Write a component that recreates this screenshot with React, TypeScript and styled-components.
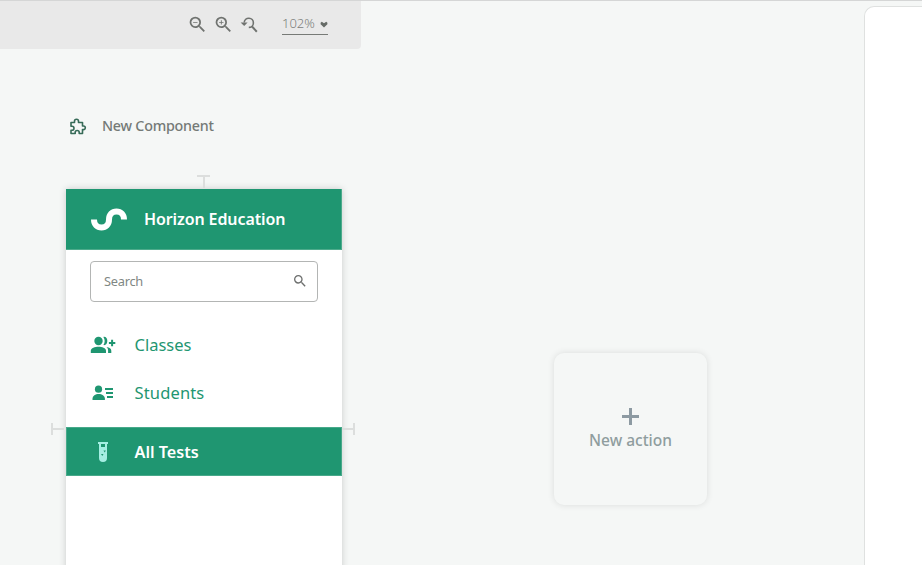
import React from "react";
import styled, { createGlobalStyle } from "styled-components";
import { MdZoomIn, MdZoomOut, MdSearch } from "react-icons/md";

const green = "#1f9671";

const GlobalStyle = createGlobalStyle`
  *, *::before, *::after { box-sizing: border-box; }
  body {
    margin: 0;
    overflow: hidden;
    background: #f5f7f6;
    font-family: "Noto Sans", "Open Sans", sans-serif;
  }
  svg { display: block; flex: none; }
`;

const Page = styled.div`
  display: flex;
  width: 922px;
  height: 565px;
  overflow: hidden;
  background: #f5f7f6;
  border-top: 1px solid #d5d6d6;
`;

const Workspace = styled.main`
  display: flex;
  flex-direction: column;
  width: 361px;
`;

const Toolbar = styled.header`
  display: flex;
  flex: none;
  align-items: flex-start;
  height: 48px;
  padding: 13px 33px 0 187px;
  background: #e9e9e9;
  border-radius: 0 0 4px 0;
  color: #707370;
`;

const Tools = styled.div`
  display: flex;
  gap: 5px;
  flex: 1;
`;

const ZoomSelect = styled.div`
  display: flex;
  justify-content: space-between;
  width: 46px;
  height: 21px;
  border-bottom: 1px solid #777a77;
`;

const Label = styled.span<{ $size: number; $tracking?: number; $weight?: number; $color: string; $leading?: number }>`
  font-size: ${(p) => p.$size}px;
  letter-spacing: ${(p) => p.$tracking ?? 0}px;
  font-weight: ${(p) => p.$weight ?? 400};
  color: ${(p) => p.$color};
  line-height: ${(p) => p.$leading ?? 20}px;
  white-space: nowrap;
`;

const Heading = styled.div`
  display: flex;
  flex: none;
  align-items: center;
  gap: 15px;
  height: 20px;
  margin: 67px 0 0 69px;
  color: #376b58;
`;

const Selection = styled.section`
  position: relative;
  flex: none;
  width: 276px;
  height: 420px;
  margin: 53px 0 0 66px;
`;

const Handle = styled.i<{ $side: "top" | "left" | "right" }>`
  position: absolute;
  ${(p) => p.$side === "top" && "left: 131px; top: -14px; width: 13px; height: 14px;"}
  ${(p) => p.$side === "left" && "left: -15px; top: 234px; width: 15px; height: 12px;"}
  ${(p) => p.$side === "right" && "right: -13px; top: 234px; width: 13px; height: 12px;"}
  border: 0 solid #dcdedd;
  border-${(p) => p.$side}-width: 2px;
  &::after {
    content: "";
    position: absolute;
    background: #dcdedd;
    ${(p) => (p.$side === "top" ? "left: 6px; top: 0; width: 2px; height: 11px;" : "left: 0; top: 5px; height: 2px; width: 11px;")}
  }
`;

const Card = styled.div`
  height: 100%;
  background: #fff;
  box-shadow: 0 0 7px rgba(0, 0, 0, 0.18);
`;

const Brand = styled.div`
  display: flex;
  align-items: center;
  gap: 17px;
  height: 61px;
  padding-left: 25px;
  background: ${green};
  border: 1px solid #4dab8c;
  border-width: 0 1px 1px 0;
`;

const SearchField = styled.div`
  display: flex;
  align-items: center;
  justify-content: space-between;
  width: 228px;
  height: 41px;
  margin: 11px 0 19px 24px;
  padding: 0 9px 1px 13px;
  border: 1px solid #b3b5b4;
  border-radius: 4px;
  color: #6d6f6e;
`;

const MenuItem = styled.div<{ $active?: boolean }>`
  display: flex;
  align-items: center;
  gap: 18.500px;
  height: ${(p) => (p.$active ? 49 : 48)}px;
  margin-top: ${(p) => (p.$active ? 10 : 0)}px;
  padding-left: 24px;
  background: ${(p) => (p.$active ? green : "transparent")};
  box-shadow: ${(p) => (p.$active ? "inset 0 0 0 1px #48a98a" : "none")};
  color: ${green};
`;

const Canvas = styled.section`
  flex: 1;
  padding: 352px 0 0 193px;
`;

const ActionCard = styled.div`
  display: flex;
  flex-direction: column;
  align-items: center;
  width: 153px;
  height: 152px;
  padding-top: 55px;
  gap: 5px;
  border-radius: 10px;
  background: #f5f7f6;
  box-shadow: 0 0 7px rgba(0, 0, 0, 0.11);
`;

const SidePanel = styled.aside`
  width: 58px;
  height: 580px;
  margin-top: 5px;
  background: #fff;
  border: 1px solid #dfe1e0;
  border-right: 0;
  border-radius: 10px 0 0 0;
`;

const PuzzleIcon = () => (
  <svg width="18" height="20" viewBox="0 0 18 20" fill="none" stroke="currentColor" strokeWidth="1.6" strokeLinejoin="round">
    <path d="M2 6.500H5.500V5.300a2 2 0 0 1 4 0V6.500H13.500V10H14.500a1.800 1.800 0 0 1 0 3.600H13.500V17.500H10.200V16.500a2 2 0 0 0-4 0V17.500H2V14.300H3a2 2 0 0 0 0-4H2z" />
  </svg>
);

const ResetZoomIcon = () => (
  <svg width="19" height="20" viewBox="0 0 19 20" fill="none" stroke="currentColor">
    <path d="M5.200 8.500A4.600 4.600 0 1 1 9.800 13.400" strokeWidth="1.6" />
    <path d="M13 12.500L17.800 17.700" strokeWidth="2" />
    <path d="M1.600 8.500h7L5.200 12z" fill="currentColor" stroke="none" />
  </svg>
);

const HeartCaret = () => (
  <svg width="8" height="20" viewBox="0 0 8 20">
    <path d="M4 13.500L.6 10.300V8.700L1.800 7.700L4 9.200L6.200 7.700L7.400 8.700V10.300z" fill="#666b67" />
  </svg>
);

const WaveLogo = () => (
  <svg width="36" height="24" viewBox="0 0 36 24" fill="none" stroke="#fff" strokeWidth="6">
    <path d="M3 12.500C3 17.500 6.200 20.500 10.500 20.500S18 17.500 18 12.500S21.200 4.500 25.500 4.500S33 7.500 33 12.500" />
  </svg>
);

const ClassesIcon = () => (
  <svg width="26" height="18" viewBox="0 0 26 18" fill="currentColor">
    <circle cx="8.500" cy="5" r="4.200" />
    <path d="M.8 17v-2.300C.8 12 5 10.700 8.500 10.700S16 12 16 14.700V17z" />
    <path d="M13.400.9C16 .5 17.300 2.500 17.300 5s-1.300 4.500-3.900 4.100c1.700-2.300 1.700-5.900 0-8.200zM16.500 11c3 .5 4.800 1.700 4.800 3.700V17h-3.200v-2.500c0-1.500-.5-2.600-1.600-3.500z" />
    <path d="M18.900 6h2.200V3.800h2V6h2.200v2h-2.200v2.200h-2V8h-2.200z" />
  </svg>
);

const StudentsIcon = () => (
  <svg width="26" height="18" viewBox="0 0 26 18" fill="currentColor">
    <circle cx="8.500" cy="5.200" r="3.600" />
    <path d="M2.500 16v-1.300c0-3 3-4.700 6.200-4.700s6.200 1.700 6.200 4.700V16z" />
    <path d="M15 4h8v2h-8zM16 8h7v2h-7zM17 12h6v2h-6z" />
  </svg>
);

const TestTubeIcon = () => (
  <svg width="26" height="22" viewBox="0 0 26 22">
    <path d="M8 1h10v2h-1v14a4 4 0 0 1-8 0V3H8z" fill="#a5eee3" />
    <path d="M11 3h4v3h-4zM13.500 9.500h2.400l-1.200 2zM11 13h2.500l-1.200 2z" fill={green} />
  </svg>
);

export default function App() {
  return (
    <>
      <GlobalStyle />
      <Page>
        <Workspace>
          <Toolbar>
            <Tools>
              <MdZoomOut size={21} />
              <MdZoomIn size={21} />
              <ResetZoomIcon />
            </Tools>
            <ZoomSelect>
              <Label $size={13} $color="#7c807c" $weight={300} $leading={18}>102%</Label>
              <HeartCaret />
            </ZoomSelect>
          </Toolbar>
          <Heading>
            <PuzzleIcon />
            <Label $size={14.3} $color="#747a76" $weight={500} $tracking={-0.24}>New Component</Label>
          </Heading>
          <Selection>
            <Card>
              <Brand>
                <WaveLogo />
                <Label $size={16} $color="#fff" $weight={600} $tracking={-0.1}>Horizon Education</Label>
              </Brand>
              <SearchField>
                <Label $size={12.8} $color="#7f8784" $tracking={-0.25}>Search</Label>
                <MdSearch size={16} />
              </SearchField>
              <MenuItem>
                <ClassesIcon />
                <Label $size={16.5} $color={green} $weight={450}>Classes</Label>
              </MenuItem>
              <MenuItem>
                <StudentsIcon />
                <Label $size={16.5} $color={green} $weight={450} $tracking={0.15}>Students</Label>
              </MenuItem>
              <MenuItem $active>
                <TestTubeIcon />
                <Label $size={16.2} $color="#fff" $weight={600}>All Tests</Label>
              </MenuItem>
            </Card>
            <Handle $side="top" />
            <Handle $side="left" />
            <Handle $side="right" />
          </Selection>
        </Workspace>
        <Canvas>
          <ActionCard>
            <svg width="17" height="17" viewBox="0 0 17 17">
              <path d="M0 8.500h17M8.500 0v17" stroke="#8d9aa2" strokeWidth="3" />
            </svg>
            <Label $size={15.5} $color="#8f9d9e" $weight={500}>New action</Label>
          </ActionCard>
        </Canvas>
        <SidePanel />
      </Page>
    </>
  );
}
